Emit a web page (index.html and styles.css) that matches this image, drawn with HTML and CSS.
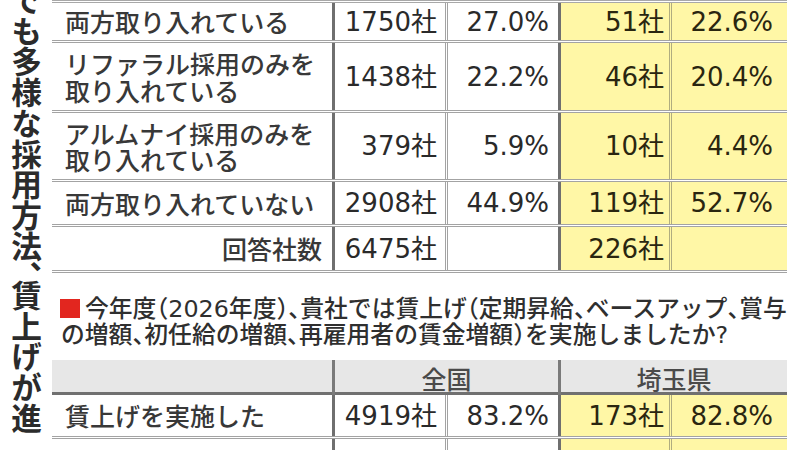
FILE: index.html
```html
<!DOCTYPE html>
<html lang="ja">
<head>
<meta charset="utf-8">
<link rel="stylesheet" href="styles.css">
</head>
<body>
<div class="page">
  <div class="side"><span class="vtext">でも多様な採用方法<span class="vp">、</span>賃上げが進</span></div>
  <div class="main">
    <div class="tbl t1">
      <div class="row r1">
        <div class="c lab">両方取り入れている</div>
        <div class="c num n1">1750社</div>
        <div class="c num n2">27.0%</div>
        <div class="c num n3 y">51社</div>
        <div class="c num n4 y">22.6%</div>
      </div>
      <div class="row r2">
        <div class="c lab">リファラル採用のみを<br>取り入れている</div>
        <div class="c num n1">1438社</div>
        <div class="c num n2">22.2%</div>
        <div class="c num n3 y">46社</div>
        <div class="c num n4 y">20.4%</div>
      </div>
      <div class="row r3">
        <div class="c lab">アルムナイ採用のみを<br>取り入れている</div>
        <div class="c num n1">379社</div>
        <div class="c num n2">5.9%</div>
        <div class="c num n3 y">10社</div>
        <div class="c num n4 y">4.4%</div>
      </div>
      <div class="row r4">
        <div class="c lab">両方取り入れていない</div>
        <div class="c num n1">2908社</div>
        <div class="c num n2">44.9%</div>
        <div class="c num n3 y">119社</div>
        <div class="c num n4 y">52.7%</div>
      </div>
      <div class="row r5">
        <div class="c lab total">回答社数</div>
        <div class="c num n1">6475社</div>
        <div class="c num n2"></div>
        <div class="c num n3 y">226社</div>
        <div class="c num n4 y"></div>
      </div>
    </div>
    <div class="q">
      <div class="ql ql1"><span class="sq"></span><span>今年度<span class="p">（</span>2026年度<span class="p">）、</span>貴社では賃上げ<span class="p">（</span>定期昇給<span class="p">、</span>ベースアップ<span class="p">、</span>賞与</span></div>
      <div class="ql ql2">の増額<span class="p">、</span>初任給の増額<span class="p">、</span>再雇用者の賃金増額<span class="p">）</span>を実施しましたか?</div>
    </div>
    <div class="tbl t2">
      <div class="hdr">
        <div class="h h0"></div>
        <div class="h h1">全国</div>
        <div class="h h2">埼玉県</div>
      </div>
      <div class="row r6">
        <div class="c lab">賃上げを実施した</div>
        <div class="c num n1">4919社</div>
        <div class="c num n2">83.2%</div>
        <div class="c num n3 y">173社</div>
        <div class="c num n4 y">82.8%</div>
      </div>
      <div class="row r7">
        <div class="c lab"></div>
        <div class="c num n1"></div>
        <div class="c num n2"></div>
        <div class="c num n3 y"></div>
        <div class="c num n4 y"></div>
      </div>
    </div>
  </div>
</div>
</body>
</html>
```

FILE: styles.css
```css
html, body {
  margin: 0;
  padding: 0;
  background: #ffffff;
}
body {
  width: 800px;
  height: 450px;
  overflow: hidden;
  color: #333333;
  font-family: "Noto Sans CJK JP", "Noto Sans", sans-serif;
}
.page {
  display: flex;
  width: 800px;
  height: 450px;
  overflow: hidden;
}
.side {
  width: 52px;
  flex: 0 0 52px;
  display: flex;
  justify-content: center;
  overflow: hidden;
}
.vtext {
  writing-mode: vertical-rl;
  font-size: 30.7px;
  line-height: 34px;
  font-weight: 700;
  color: #2b2b2b;
  margin-top: -15px;
  white-space: nowrap;
}
.vp {
  letter-spacing: -12px;
}
.main {
  flex: 0 0 735px;
  width: 735px;
}
.tbl {
  width: 735px;
}
.t1 {
  border-top: 3px double #a8a8a8;
}
.row {
  display: grid;
  grid-template-columns: 283px 113px 113px 111px 115px;
  border-bottom: 3px double #a3a3a3;
  box-sizing: border-box;
}
.r1 { height: 40px; }
.r2 { height: 70px; }
.r3 { height: 69px; }
.r4 { height: 45px; }
.r5 { height: 46px; }
.r6 { height: 44px; }
.r7 { height: 40px; }
.c {
  display: flex;
  align-items: center;
  box-sizing: border-box;
}
.lab {
  font-size: 25px;
  line-height: 26.5px;
  font-weight: 500;
  padding-left: 13px;
  border-right: 3px solid #6f6f6f;
  color: #383838;
}
.lab.total {
  justify-content: flex-end;
  padding-right: 10px;
}
.num {
  justify-content: flex-end;
  font-family: "DejaVu Sans", "Noto Sans CJK JP", sans-serif;
  font-size: 26px;
  line-height: 30px;
  color: #2a2a2a;
}
.n1 {
  padding-right: 8px;
  border-right: 3px double #a3a3a3;
}
.n2 {
  padding-right: 9px;
  border-right: 3px solid #6f6f6f;
}
.n3 {
  padding-right: 5px;
  border-right: 3px double #b0ad80;
}
.n4 {
  padding-right: 14px;
}
.y {
  background: #fff7a6;
  color: #2a2610;
}
.q {
  margin-top: 22px;
  padding-left: 9px;
  font-family: "DejaVu Sans", "Noto Sans CJK JP", sans-serif;
  font-size: 23.8px;
  line-height: 24px;
  font-weight: 500;
  color: #2f2f2f;
  white-space: nowrap;
}
.q .p {
  font-family: "Noto Sans CJK JP", sans-serif;
  font-feature-settings: "halt";
}
.ql1 {
  display: flex;
  align-items: center;
}
.sq {
  width: 20px;
  height: 19px;
  background: #e2261f;
  margin-left: -1px;
  margin-right: 5px;
  flex: 0 0 20px;
}
.t2 {
  margin-top: 13px;
}
.hdr {
  display: grid;
  grid-template-columns: 283px 226px 226px;
  height: 35px;
  background: #e7e7e7;
  border-bottom: 3px solid #707070;
  box-sizing: border-box;
}
.h {
  display: flex;
  align-items: center;
  justify-content: center;
  box-sizing: border-box;
  font-size: 25px;
  font-weight: 500;
  color: #4a4a4a;
}
.h0, .h1 {
  border-right: 3px solid #7a7a7a;
}
```
